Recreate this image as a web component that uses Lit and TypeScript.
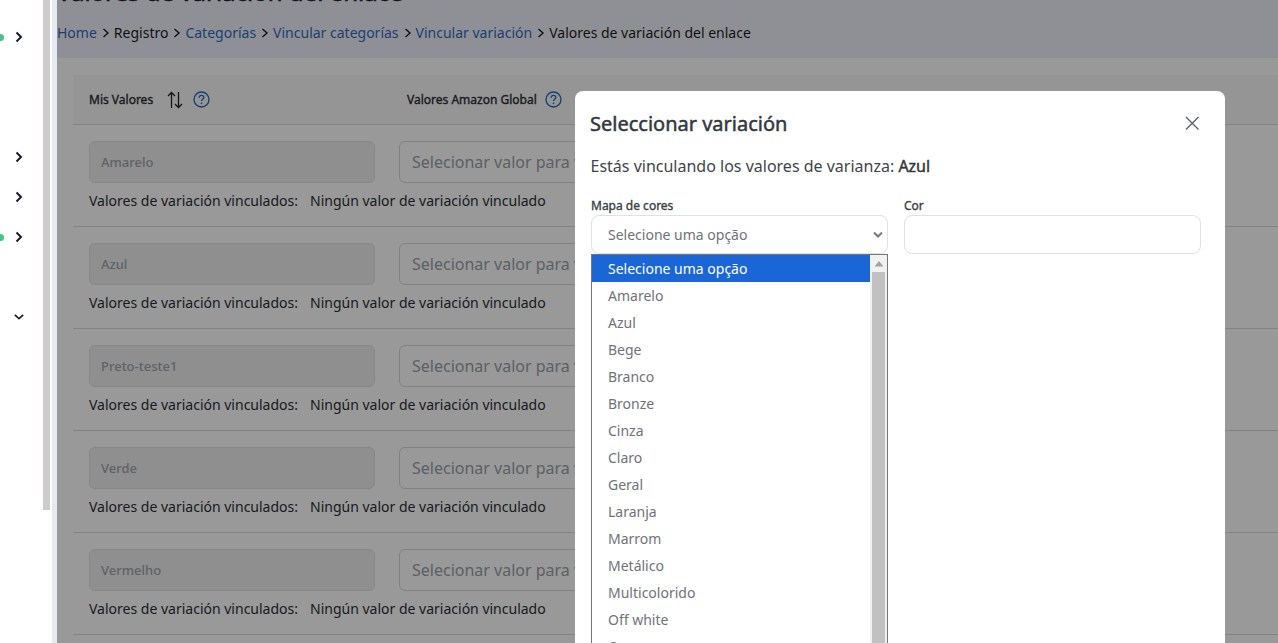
import { LitElement, css, html } from 'lit';
import { customElement } from 'lit/decorators.js';

const VALUES = ['Amarelo', 'Azul', 'Preto-teste1', 'Verde', 'Vermelho', 'Branco'];
const OPTIONS = [
  'Selecione uma opção', 'Amarelo', 'Azul', 'Bege', 'Branco', 'Bronze', 'Cinza', 'Claro', 'Geral',
  'Laranja', 'Marrom', 'Metálico', 'Multicolorido', 'Off white', 'Ouro'
];

const chevronRight = html`<svg width="10" height="12" viewBox="0 0 10 12"><path d="M2.5 1.5 7 6l-4.500 4.500" fill="none" stroke="#1a1d2b" stroke-width="2"/></svg>`;
const chevronDown = html`<svg width="12" height="10" viewBox="0 0 12 10"><path d="M1 2.500 6 7l5-4.500" fill="none" stroke="#1a1d2b" stroke-width="2"/></svg>`;
const helpIcon = html`<svg width="17" height="17" viewBox="0 0 17 17"><circle cx="8.500" cy="8.500" r="7.500" fill="none" stroke="#2a66c4" stroke-width="1.300"/><path d="M6.200 6.700c0-1.500 1-2.300 2.300-2.300s2.300.8 2.300 2.100c0 1.800-2.300 1.800-2.300 3.500" fill="none" stroke="#2a66c4" stroke-width="1.300"/><circle cx="8.500" cy="12.300" r=".9" fill="#2a66c4"/></svg>`;
const sortIcon = html`<svg width="16" height="18" viewBox="0 0 16 18"><path d="M4.500 17V1.500M1 5l3.500-3.500L8 5M11.500 1v15.500M8 13l3.500 3.500L15 13" fill="none" stroke="#222" stroke-width="1.300"/></svg>`;

@customElement('app-root')
export class AppRoot extends LitElement {
  static styles = css`
    :host {
      display: block;
      position: relative;
      height: 643px;
      overflow: hidden;
      background: #ffffff;
      font-family: 'Noto Sans', sans-serif;
      color: #2b2f36;
    }

    .layout {
      display: flex;
      height: 643px;
    }

    .sidebar {
      width: 43px;
      flex: none;
      position: relative;
    }

    .nav-item {
      position: absolute;
      left: 14px;
      width: 10px;
      height: 12px;
      display: flex;
      align-items: center;
      justify-content: center;
    }

    .dot {
      position: absolute;
      left: -3px;
      width: 7px;
      height: 7px;
      border-radius: 50%;
      background: #45c486;
    }

    .side-scroll {
      width: 9px;
      flex: none;
      background: #ffffff;
    }

    .side-thumb {
      width: 7px;
      height: 510px;
      background: #cdcbcb;
    }

    .strip {
      width: 5px;
      flex: none;
      background: #e6e8f2;
    }

    .main {
      flex: 1;
      min-width: 0;
      background: #ffffff;
      overflow: hidden;
    }

    .page-head {
      background: #eff1f9;
      height: 58px;
      overflow: hidden;
    }

    /* the reference thickens a regular face, so the widths are those of weight 400 */
    .page-head h1 {
      margin: -24px 0 0;
      font-size: 24px;
      line-height: 32px;
      font-weight: 400;
      -webkit-text-stroke: 0.6px currentColor;
      color: #1f2329;
    }

    .crumbs {
      display: flex;
      align-items: center;
      margin-top: 15px;
      font-size: 14px;
      line-height: 20px;
      color: #1c1c1c;
      white-space: pre;
    }

    .crumbs a {
      color: #2f69c0;
    }

    .crumbs svg {
      margin: 0 4px 0 5px;
    }

    .panel {
      padding: 17px 0 0 16px;
    }

    .table-head {
      display: flex;
      align-items: center;
      height: 50px;
      box-sizing: border-box;
      padding: 0 16px;
      background: #f8f8f8;
      border-bottom: 1px solid #dadae2;
      font-size: 12px;
      font-weight: 400;
      -webkit-text-stroke: 0.35px currentColor;
      color: #2b2f36;
    }

    .head-mine {
      width: 318px;
      display: flex;
      align-items: center;
    }

    .head-mine .sort {
      margin-left: 14px;
      display: flex;
    }

    .head-mine .help {
      margin-left: 10px;
      display: flex;
    }

    .head-amazon {
      display: flex;
      align-items: center;
      gap: 8px;
    }

    .row {
      height: 102px;
      box-sizing: border-box;
      padding: 16px 16px 0;
      border-bottom: 1px solid #dadae2;
    }

    .fields {
      display: flex;
      gap: 24px;
    }

    .value-box,
    .target-box {
      height: 42px;
      box-sizing: border-box;
      border-radius: 6px;
      display: flex;
      align-items: center;
      white-space: nowrap;
    }

    .value-box {
      width: 286px;
      flex: none;
      padding: 0 11px;
      background: #eeeeee;
      border: 1px solid #e2e2e2;
      font-size: 13px;
      font-weight: 500;
      color: #a0a3ab;
    }

    .target-box {
      width: 500px;
      flex: none;
      padding: 0 12px;
      border: 1px solid #d8d8d8;
      font-size: 16px;
      color: #9aa0a8;
      background: #ffffff;
    }

    .linked {
      display: flex;
      gap: 12px;
      margin-top: 8px;
      font-size: 14px;
      line-height: 20px;
      color: #2b2f36;
    }

    .backdrop {
      position: absolute;
      left: 57px;
      top: 0;
      right: 0;
      bottom: 0;
      background: rgba(0, 0, 0, 0.4);
    }

    .modal {
      position: absolute;
      left: 575px;
      top: 91px;
      width: 650px;
      height: 600px;
      background: #ffffff;
      border-radius: 8px;
      padding: 17px 24px 0 15px;
      box-sizing: border-box;
      color: #343a40;
    }

    .modal-head {
      display: flex;
      justify-content: space-between;
      align-items: center;
      height: 32px;
    }

    .modal-head h2 {
      margin: 0;
      font-size: 20px;
      line-height: 32px;
      font-weight: 400;
      -webkit-text-stroke: 0.5px currentColor;
      color: #33383e;
    }

    .close {
      display: flex;
      margin-right: 1px;
      margin-top: -2px;
    }

    .intro {
      margin-top: 14px;
      padding-left: 0.5px;
      font-size: 16px;
      line-height: 24px;
      color: #3f444b;
    }

    .intro b {
      font-weight: 400;
      -webkit-text-stroke: 0.45px currentColor;
      color: #33383e;
    }

    .form {
      display: grid;
      grid-template-columns: 297px 297px;
      gap: 16px;
      margin-top: 20px;
      padding-left: 1px;
    }

    .form label {
      display: block;
      font-size: 12px;
      line-height: 16px;
      font-weight: 400;
      -webkit-text-stroke: 0.35px currentColor;
      color: #3a3f45;
      margin-bottom: 1px;
    }

    .control {
      height: 39px;
      box-sizing: border-box;
      border: 1px solid #dee2e6;
      border-radius: 8px;
      display: flex;
      align-items: center;
      justify-content: space-between;
      padding: 0 4px 0 16px;
      font-size: 14px;
      color: #6f7279;
      background: #ffffff;
    }

    .field {
      position: relative;
    }

    .listbox {
      position: absolute;
      left: 0;
      top: 56px;
      width: 297px;
      height: 420px;
      box-sizing: border-box;
      border: 1px solid #767676;
      background: #ffffff;
      display: flex;
      font-size: 14px;
    }

    .options {
      flex: 1;
    }

    .option {
      height: 27px;
      line-height: 27px;
      padding-left: 16px;
      color: #6f7279;
    }

    .option.selected {
      background: #1a66d6;
      color: #ffffff;
    }

    .track {
      width: 17px;
      flex: none;
      background: #f1f1f1;
      display: flex;
      flex-direction: column;
      align-items: center;
    }

    .arrow {
      height: 17px;
      display: flex;
      align-items: center;
    }

    .thumb {
      width: 13px;
      flex: 1;
      background: #c1c1c1;
    }
  `;

  override render() {
    return html`
      <div class="layout">
        <nav class="sidebar">
          <span class="dot" style="top:34px"></span>
          <span class="dot" style="top:234px"></span>
          <span class="nav-item" style="top:31px">${chevronRight}</span>
          <span class="nav-item" style="top:151px">${chevronRight}</span>
          <span class="nav-item" style="top:191px">${chevronRight}</span>
          <span class="nav-item" style="top:231px">${chevronRight}</span>
          <span class="nav-item" style="top:311px">${chevronDown}</span>
        </nav>
        <div class="side-scroll"><div class="side-thumb"></div></div>
        <div class="strip"></div>
        <main class="main">
          <header class="page-head">
            <h1>Valores de variación del enlace</h1>
            <div class="crumbs">
              <a>Home</a>${this.sep()}<span>Registro</span>${this.sep()}<a>Categorías</a>${this.sep()}<a>Vincular categorías</a>${this.sep()}<a>Vincular variación</a>${this.sep()}<span>Valores de variación del enlace</span>
            </div>
          </header>
          <section class="panel">
            <div class="table-head">
              <div class="head-mine">
                Mis Valores <span class="sort">${sortIcon}</span><span class="help">${helpIcon}</span>
              </div>
              <div class="head-amazon">Valores Amazon Global ${helpIcon}</div>
            </div>
            ${VALUES.map(
              (value) => html`
                <div class="row">
                  <div class="fields">
                    <div class="value-box">${value}</div>
                    <div class="target-box">Selecionar valor para vincular</div>
                  </div>
                  <div class="linked">
                    <span>Valores de variación vinculados:</span>
                    <span>Ningún valor de variación vinculado</span>
                  </div>
                </div>
              `
            )}
          </section>
        </main>
      </div>
      <div class="backdrop"></div>
      <div class="modal">
        <div class="modal-head">
          <h2>Seleccionar variación</h2>
          <span class="close">
            <svg width="16" height="16" viewBox="0 0 16 16"><path d="M2 2l12.500 12.500M14.500 2 2 14.500" fill="none" stroke="#5a6470" stroke-width="1.400"/></svg>
          </span>
        </div>
        <div class="intro">Estás vinculando los valores de varianza: <b>Azul</b></div>
        <div class="form">
          <div class="field">
            <label>Mapa de cores</label>
            <div class="control">
              <span>Selecione uma opção</span>
              <svg width="10" height="8" viewBox="0 0 10 8"><path d="M1 1.500 5 5.500l4-4" fill="none" stroke="#777" stroke-width="2"/></svg>
            </div>
            <div class="listbox">
              <div class="options">
                ${OPTIONS.map(
                  (option, i) => html`<div class=${i === 0 ? 'option selected' : 'option'}>${option}</div>`
                )}
              </div>
              <div class="track">
                <span class="arrow"><svg width="10" height="6" viewBox="0 0 10 6"><path d="M5 0l4.500 5.500h-9z" fill="#a3a3a3"/></svg></span>
                <div class="thumb"></div>
              </div>
            </div>
          </div>
          <div class="field">
            <label>Cor</label>
            <div class="control"></div>
          </div>
        </div>
      </div>
    `;
  }

  private sep() {
    return html`<svg width="8" height="10" viewBox="0 0 8 10"><path d="M1.500 1 6 5 1.500 9" fill="none" stroke="#1c1c1c" stroke-width="1.400"/></svg>`;
  }
}
